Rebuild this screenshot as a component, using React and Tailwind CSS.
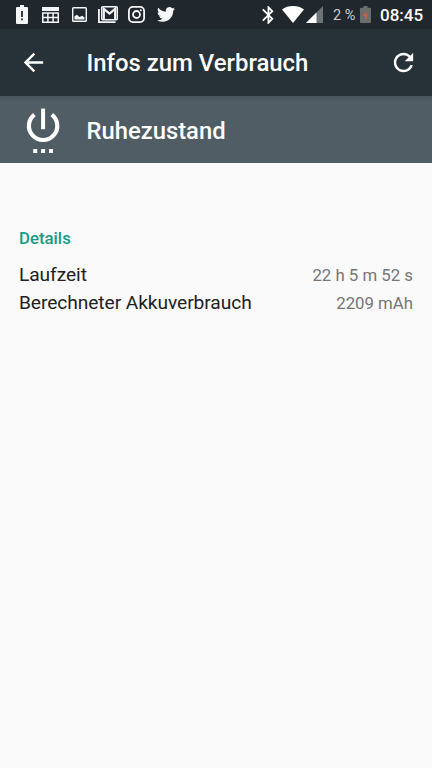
// App.jsx
import React from "react";

const details = [
  { label: "Laufzeit", value: "22 h 5 m 52 s" },
  { label: "Berechneter Akkuverbrauch", value: "2209 mAh" },
];

const NotificationIcons = () => (
  <div className="flex items-center text-[#f4f6f7]">
    {/* Battery alert */}
    <svg viewBox="0 0 12 19" className="w-3 h-[19px]" fill="currentColor">
      <path
        fillRule="evenodd"
        d="M4 0h4v2h3a1 1 0 0 1 1 1v15a1 1 0 0 1-1 1H1a1 1 0 0 1-1-1V3a1 1 0 0 1 1-1h3zM5.1 6h1.8v6H5.1zM5.1 13.5h1.8v1.8H5.1z"
      />
    </svg>
    {/* Calendar */}
    <svg viewBox="0 0 17 16" className="ml-[14.5px] w-[17px] h-4">
      <path fill="currentColor" d="M0 0h17v4H0z" />
      <path
        fill="none"
        stroke="currentColor"
        strokeWidth="1.5"
        d="M.75 5.9h15.5v9.35H.75zM5.9 5.9v9.1M11.1 5.9v9.1M.75 10.6h15.5"
      />
    </svg>
    {/* Screenshot */}
    <svg viewBox="0 0 15 15" className="ml-[13px] w-[15px] h-[15px]">
      <rect x=".7" y=".7" width="13.6" height="13.6" rx=".8" fill="none" stroke="currentColor" strokeWidth="1.4" />
      <path fill="currentColor" d="M2.5 12.5V9.2l2.4-1.4 2.6 2.2 2.8-1.2 2.2 1.7v2z" />
    </svg>
    {/* Mail */}
    <svg viewBox="0 0 20 17" className="ml-[11px] w-5 h-[17px]" fill="none" stroke="currentColor">
      <path strokeWidth="1.8" d="M.9 3v13.1h16.6" />
      <rect x="3.7" y=".7" width="15.6" height="13" rx="1" strokeWidth="1.4" />
      <path strokeWidth="2.2" d="M5.8 13.5V2.8l5.7 4.8 5.7-4.8v10.7" />
    </svg>
    {/* Instagram */}
    <svg viewBox="0 0 17 17" className="ml-2.5 w-[17px] h-[17px]" fill="none" stroke="currentColor">
      <rect x=".9" y=".9" width="15.2" height="15.2" rx="4" strokeWidth="1.8" />
      <circle cx="8.5" cy="8.5" r="3.5" strokeWidth="1.8" />
      <circle cx="12.9" cy="4.2" r="1" fill="currentColor" stroke="none" />
    </svg>
    {/* Twitter */}
    <svg viewBox="0 2 24 20" className="ml-3 w-[18px] h-[15px]" fill="currentColor">
      <path d="M23.953 4.57a10 10 0 01-2.825.775 4.958 4.958 0 002.163-2.723c-.951.555-2.005.959-3.127 1.184a4.92 4.92 0 00-8.384 4.482C7.69 8.095 4.067 6.13 1.64 3.162a4.822 4.822 0 00-.666 2.475c0 1.71.87 3.213 2.188 4.096a4.904 4.904 0 01-2.228-.616v.06a4.923 4.923 0 003.946 4.827 4.996 4.996 0 01-2.212.085 4.936 4.936 0 004.604 3.417 9.867 9.867 0 01-6.102 2.105c-.39 0-.779-.023-1.17-.067a13.995 13.995 0 007.557 2.209c9.053 0 13.998-7.496 13.998-13.985 0-.21 0-.42-.015-.63A9.935 9.935 0 0024 4.59z" />
    </svg>
  </div>
);

const SystemIcons = () => (
  <div className="flex items-center text-white">
    {/* Bluetooth */}
    <svg viewBox="5 2 13 20" className="w-[12px] h-[18px]" fill="currentColor">
      <path d="M17.71 7.71L12 2h-1v7.59L6.41 5 5 6.41 10.59 12 5 17.59 6.41 19 11 14.41V22h1l5.71-5.71-4.3-4.29 4.3-4.29zM13 5.83l1.88 1.88L13 9.59V5.83zm1.88 10.46L13 18.17v-3.76l1.88 1.88z" />
    </svg>
    {/* Wi-Fi */}
    <svg viewBox="0 0 22 17" className="ml-2 w-[22px] h-[17px]" fill="currentColor">
      <path d="M11 17L0 3.4C3 1.1 6.8 0 11 0s8 1.1 11 3.4z" />
    </svg>
    {/* Mobile signal */}
    <svg viewBox="0 0 17 17" className="ml-0.5 w-[17px] h-[17px]" fill="currentColor">
      <path opacity=".35" d="M0 17L17 0v17z" />
      <path d="M0 17L10.5 6.5V17z" />
    </svg>
    <span className="ml-[10px] pt-[3px] w-[27px] text-[14.5px] leading-none text-[#c9cdd0] whitespace-nowrap">
      2 %
    </span>
    {/* Battery */}
    <svg viewBox="0 0 11 17" className="w-[11px] h-[17px]">
      <path fill="#6c6d6d" d="M3.5 0h4v1.7H10a1 1 0 0 1 1 1V16a1 1 0 0 1-1 1H1a1 1 0 0 1-1-1V2.7a1 1 0 0 1 1-1h2.5z" />
      <path fill="#c4604c" d="M6.5 4.2L2.8 10h2.3v4.2L8.4 8.5H6.2z" />
    </svg>
    <span className="ml-[9px] pt-px w-[43px] text-[17px] leading-none font-medium whitespace-nowrap">
      08:45
    </span>
  </div>
);

const StatusBar = () => (
  <div className="h-[29px] pl-[15.5px] pr-[9px] flex items-center justify-between bg-[#20272d]">
    <NotificationIcons />
    <SystemIcons />
  </div>
);

const AppBar = () => (
  <header className="h-[67px] pl-[19px] pr-[14px] flex items-center bg-[#263138] text-white">
    <svg viewBox="0 0 24 24" className="w-[29px] h-[29px]" fill="currentColor">
      <path d="M20 11H7.83l5.59-5.59L12 4l-8 8 8 8 1.41-1.41L7.83 13H20v-2z" />
    </svg>
    <h1 className="ml-[38.5px] pt-[3px] flex-1 text-[23.9px] leading-none font-medium whitespace-nowrap">
      Infos zum Verbrauch
    </h1>
    <svg viewBox="0 0 24 24" className="w-[29px] h-[29px]" fill="currentColor">
      <path d="M17.65 6.35C16.2 4.9 14.21 4 12 4c-4.42 0-7.99 3.58-7.99 8s3.57 8 7.99 8c3.73 0 6.84-2.55 7.73-6h-2.08c-.82 2.33-3.04 4-5.65 4-3.31 0-6-2.69-6-6s2.69-6 6-6c1.66 0 3.14.69 4.22 1.78L13 11h7V4l-2.35 2.35z" />
    </svg>
  </header>
);

const EntryHeader = () => (
  <div className="h-[67px] pl-[26px] flex items-center bg-[#505d64] bg-linear-to-b from-[#4a565d] to-[#505d64] to-10% text-white">
    {/* Power symbol with three dots */}
    <svg viewBox="0 0 34 46" className="mt-[3px] w-[34px] h-[46px]" fill="none" stroke="currentColor">
      <path strokeWidth="4" d="M17.1.6v20.6" />
      <path strokeWidth="4.2" d="M8.4 6.600A14.200 14.200 0 1 0 25.800 6.600" />
      <path strokeWidth="4" d="M7.2 42.900h4M15.1 42.900h4M23 42.900h4" />
    </svg>
    <h2 className="ml-[26.5px] pt-[5px] text-[23.8px] leading-none font-medium">Ruhezustand</h2>
  </div>
);

const DetailRow = ({ label, value }) => (
  <div className="h-[28.5px] flex items-center justify-between whitespace-nowrap">
    <span className="text-[19.2px] tracking-[-0.08px] text-[#212121]">{label}</span>
    <span className="text-[16.8px] text-[#757575]">{value}</span>
  </div>
);

export default function App() {
  return (
    <div className="w-full h-screen overflow-hidden flex flex-col bg-[#fafafa] font-[Roboto,sans-serif]">
      <StatusBar />
      <AppBar />
      <EntryHeader />
      <main className="px-[19px] pt-[65px]">
        <h3 className="text-[16.8px] leading-5 font-medium text-[#179a84]">Details</h3>
        <div className="mt-[13px]">
          {details.map((row) => (
            <DetailRow key={row.label} label={row.label} value={row.value} />
          ))}
        </div>
      </main>
    </div>
  );
}
